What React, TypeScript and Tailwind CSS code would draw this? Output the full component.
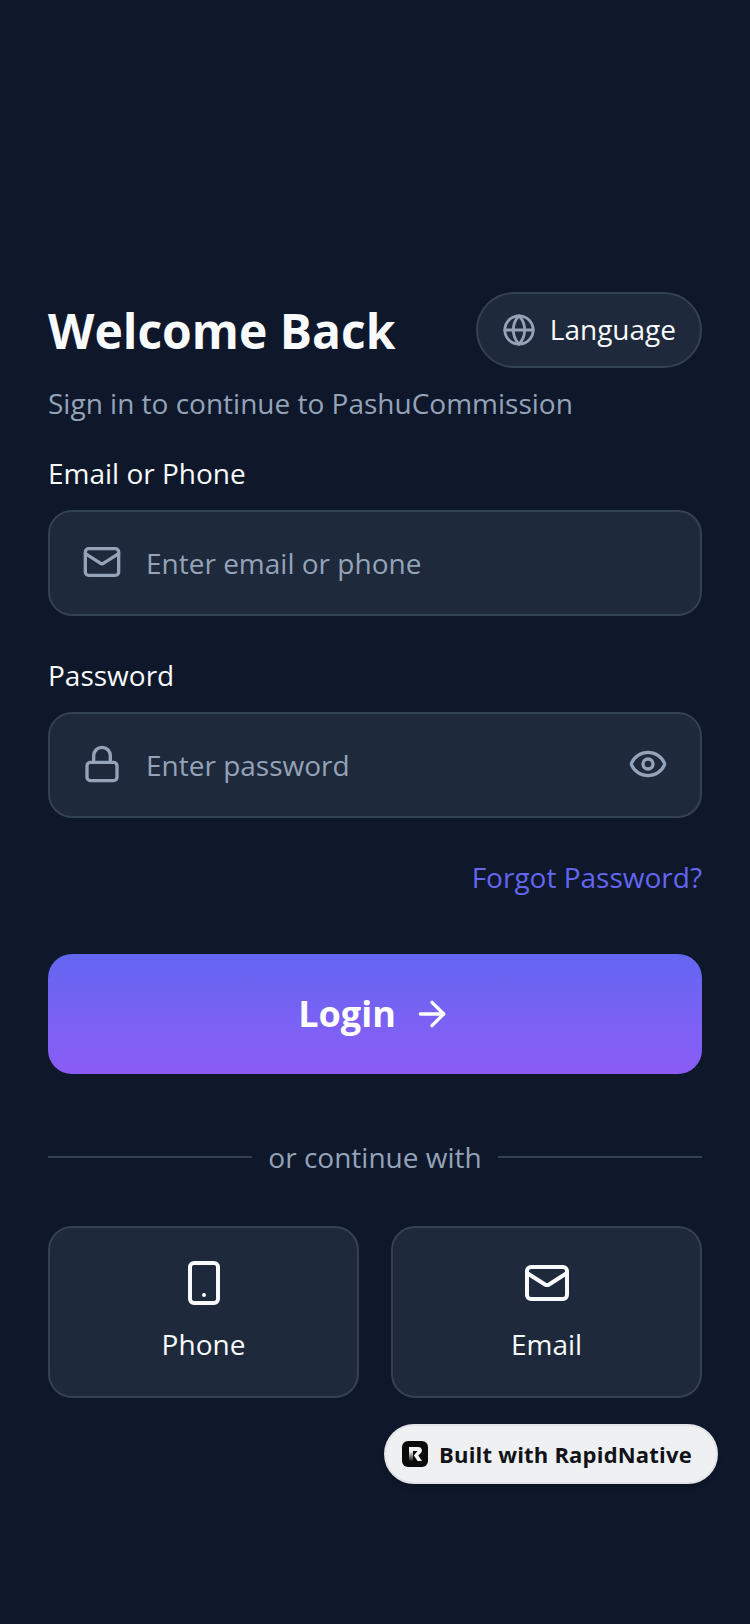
import { ArrowRight, Eye, Globe, Lock, Mail, Smartphone } from 'lucide-react'

function Field({ label, placeholder, icon, trailing }: { label: string; placeholder: string; icon: React.ReactNode; trailing?: React.ReactNode }) {
  return (
    <div>
      <p className="text-[28px] leading-[38px] text-[#f8fafc]">{label}</p>
      <div className="mt-[18px] flex h-[106px] items-center rounded-[24px] border-2 border-[#334155] bg-[#1e293b] px-[32px]">
        {icon}
        <span className="ml-[24px] flex-1 text-[28px] leading-[38px] text-[#94a3b8]">{placeholder}</span>
        {trailing}
      </div>
    </div>
  )
}

function AltButton({ label, icon }: { label: string; icon: React.ReactNode }) {
  return (
    <div className="flex h-[172px] flex-1 flex-col items-center justify-center gap-[18px] rounded-[24px] border-2 border-[#334155] bg-[#1e293b] pb-[2px]">
      {icon}
      <span className="text-[28px] leading-[38px] text-[#f8fafc]">{label}</span>
    </div>
  )
}

export default function App() {
  return (
    <div className="relative h-[1624px] w-[750px] overflow-hidden bg-[#0f172a] px-[48px] pt-[292px] font-['Open_Sans',sans-serif]">
      {/* Header */}
      <div className="flex h-[76px] items-center justify-between">
        <h1 className="mt-[2px] text-[48px] font-bold leading-[76px] text-[#f8fafc]">Welcome Back</h1>
        <div className="flex h-[76px] items-center gap-[14px] rounded-full border-2 border-[#334155] bg-[#1e293b] px-[24px]">
          <Globe size={34} strokeWidth={2} className="text-[#94a3b8]" />
          <span className="pb-[2px] text-[28px] leading-[38px] text-[#f8fafc]">Language</span>
        </div>
      </div>
      <p className="mt-[16px] text-[28px] leading-[38px] text-[#94a3b8]">Sign in to continue to PashuCommission</p>

      <div className="mt-[32px] flex flex-col gap-[40px]">
        <Field label="Email or Phone" placeholder="Enter email or phone" icon={<Mail size={40} className="mb-[2px] text-[#94a3b8]" />} />
        <Field
          label="Password"
          placeholder="Enter password"
          icon={<Lock size={40} className="mb-[2px] text-[#94a3b8]" />}
          trailing={<Eye size={40} className="mb-[2px] text-[#94a3b8]" />}
        />
      </div>

      <p className="mt-[40px] text-right text-[28px] leading-[38px] text-[#6366f1]">Forgot Password?</p>

      {/* Login */}
      <div className="mt-[58px] flex h-[120px] items-center justify-center gap-[16px] rounded-[24px] bg-gradient-to-b from-[#6366f1] to-[#8b5cf6]">
        <span className="text-[36px] font-bold leading-[48px] text-white">Login</span>
        <ArrowRight size={40} className="text-white" />
      </div>

      {/* Divider */}
      <div className="mt-[64px] flex items-center gap-[16px]">
        <div className="h-[2px] flex-1 bg-[#334155]" />
        <span className="text-[28px] leading-[38px] text-[#94a3b8]">or continue with</span>
        <div className="h-[2px] flex-1 bg-[#334155]" />
      </div>

      <div className="mt-[50px] flex gap-[32px]">
        <AltButton label="Phone" icon={<Smartphone size={48} className="text-[#f8fafc]" />} />
        <AltButton label="Email" icon={<Mail size={48} className="text-[#f8fafc]" />} />
      </div>

      {/* Badge */}
      <div className="absolute left-[384px] top-[1424px] flex h-[60px] w-[334px] items-center gap-[11px] rounded-full border-2 border-[#e2e4e8] bg-[#eef0f2] pl-[16px] shadow-md">
        <svg width="26" height="26" viewBox="0 0 26 26">
          <defs>
            <linearGradient id="stem" x1="0" y1="0" x2="0" y2="1">
              <stop offset="0.3" stopColor="#f5f5f5" />
              <stop offset="1" stopColor="#1a1a1a" />
            </linearGradient>
          </defs>
          <rect width="26" height="26" rx="6" fill="#0b0b0b" />
          <path d="M7 6h4v14H7z" fill="url(#stem)" />
          <path d="M7 6h9.500a3.500 3.500 0 0 1 2.600 5.800L16.300 14.500 20 20h-4.400l-3.800-5.600 3.700-4.400H7z" fill="#f5f5f5" />
        </svg>
        <span className="text-[22px] font-bold leading-[30px] tracking-[0.2px] text-[#111318]">Built with RapidNative</span>
      </div>
    </div>
  )
}
